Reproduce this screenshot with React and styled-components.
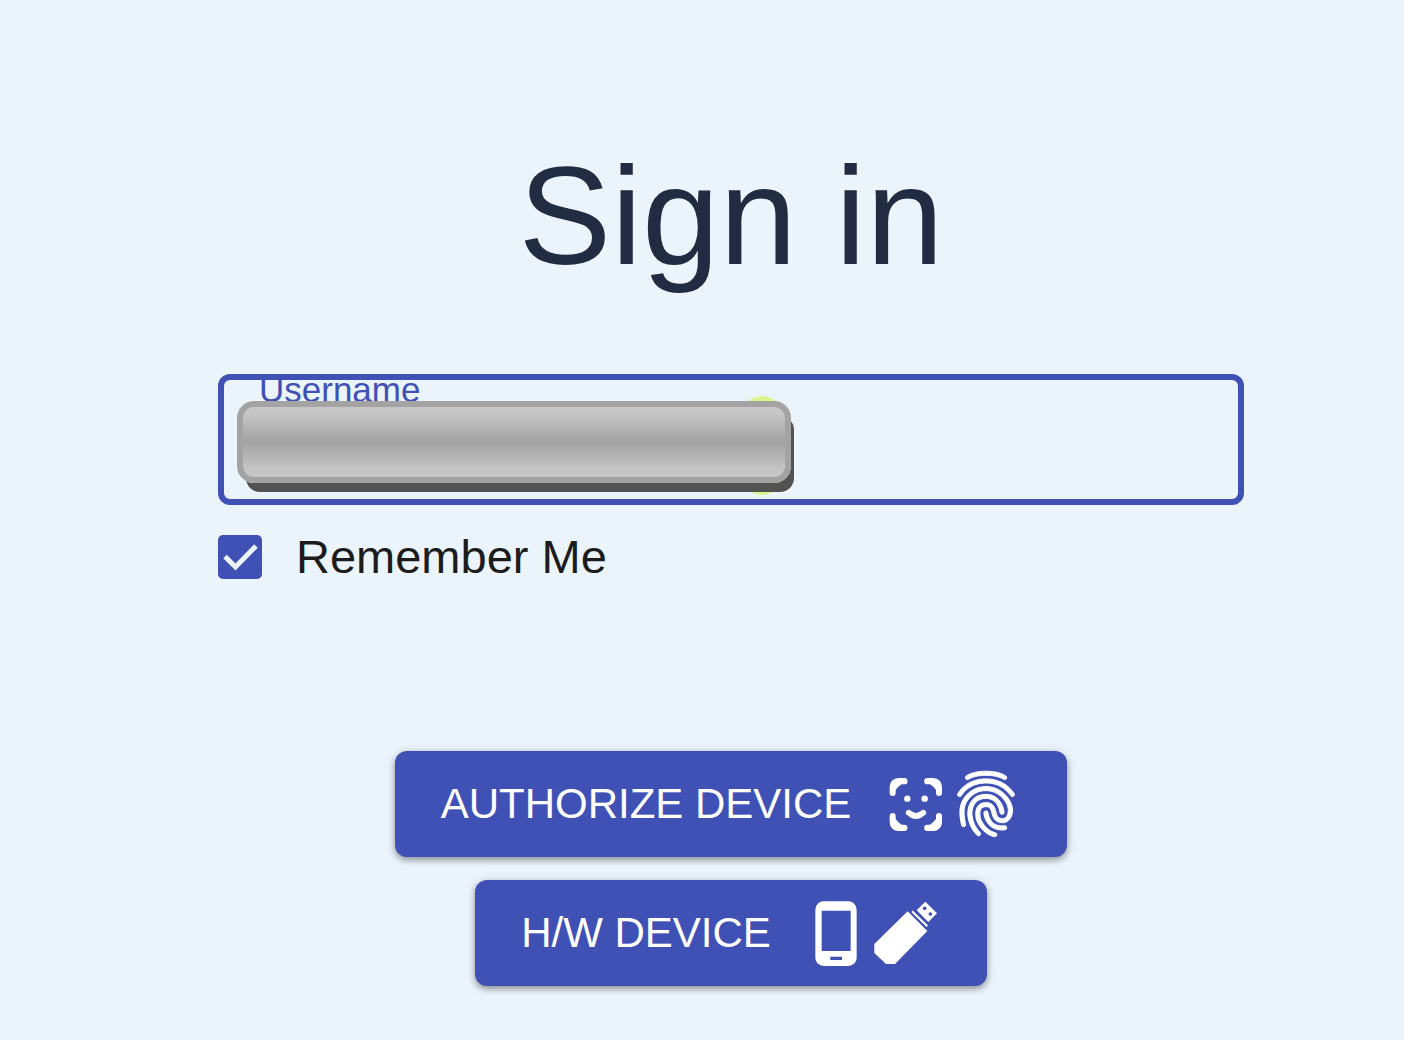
import React, { useState } from "react";
import styled, { createGlobalStyle } from "styled-components";
import { IoFingerPrint } from "react-icons/io5";

const GlobalStyle = createGlobalStyle`
  *, *::before, *::after { box-sizing: border-box; }
  body {
    margin: 0;
    background: #ebf4fb;
    font-family: "Liberation Sans", Arial, sans-serif;
  }
`;

const Page = styled.main`
  padding: 136px 160px 48px 218px;
`;

const Form = styled.form`
  display: flex;
  flex-direction: column;
`;

const Title = styled.h1`
  margin: 0 0 78px;
  font-size: 139px;
  line-height: 160px;
  font-weight: 400;
  text-align: center;
  color: #212c42;
`;

const Field = styled.div`
  position: relative;
  height: 131px;
  border: 6px solid #3f51b5;
  border-radius: 12px;
  overflow: hidden;
`;

const FieldLabel = styled.label`
  position: absolute;
  top: -8px;
  left: 35px;
  font-size: 35px;
  line-height: 36px;
  color: #3f51b5;
`;

const TextInput = styled.input`
  width: 100%;
  height: 100%;
  padding: 24px 32px 0;
  border: 0;
  outline: 0;
  background: transparent;
  font: inherit;
  font-size: 47px;
  color: #1c1c1c;
`;

const Marker = styled.span`
  position: absolute;
  top: 16px;
  left: 516px;
  width: 44px;
  height: 99px;
  border-radius: 22px;
  background: #d8f68c;
`;

const Plate = styled.span`
  position: absolute;
  top: 21px;
  left: 13px;
  width: 554px;
  height: 82px;
  border: 6px solid #a3a3a3;
  border-radius: 17px;
  background: linear-gradient(#c8c8c8, #c4c4c4 12%, #a3a3a3 50%, #c4c4c4 88%, #c8c8c8);
  box-shadow: 6px 12px 0 -3px #525252;
`;

const Remember = styled.label`
  display: flex;
  align-items: center;
  align-self: flex-start;
  gap: 34px;
  margin-top: 30px;
  font-size: 47px;
  line-height: 44px;
  color: #1c1c1c;
`;

const CheckFrame = styled.span`
  display: grid;
  width: 44px;
  height: 44px;

  & > * {
    grid-area: 1 / 1;
  }

  svg {
    pointer-events: none;
  }
`;

const Checkbox = styled.input`
  appearance: none;
  width: 44px;
  height: 44px;
  margin: 0;
  border: 5px solid #3f51b5;
  border-radius: 5px;

  &:checked {
    background: #3f51b5;
  }
`;

const Actions = styled.div`
  display: flex;
  flex-direction: column;
  align-items: center;
  gap: 23px;
  margin-top: 172px;
`;

const Button = styled.button`
  display: flex;
  align-items: center;
  height: 106px;
  padding: 0 46px;
  border: 0;
  border-radius: 12px;
  background: #3f51b5;
  color: #fff;
  font: inherit;
  font-size: 42px;
  white-space: nowrap;
  cursor: pointer;
  box-shadow: 0 3px 6px rgba(0, 0, 0, 0.35), 0 1px 12px rgba(0, 0, 0, 0.1);
`;

const Icons = styled.span`
  display: flex;
  margin-left: 30px;
`;

const IconBox = styled.span`
  display: grid;
  place-items: center;
  width: 70px;
  height: 70px;
`;

const FingerprintIcon = styled(IoFingerPrint)`
  width: 70px;
  height: 70px;

  path {
    stroke: #fff;
    stroke-width: 7px;
  }
`;

const corner =
  "M41 108a9 9 0 0 1-9-9V80A26 26 0 0 1 58 54H76a9.5 9.5 0 0 1 0 19H68Q58 79 50 90V99a9 9 0 0 1-9 9z";

function FaceIcon() {
  return (
    <svg width="70" height="70" viewBox="6 27 210 210" fill="#fff" aria-hidden="true">
      <path d={corner} />
      <path d={corner} transform="matrix(-1 0 0 1 221 0)" />
      <path d={corner} transform="matrix(1 0 0 -1 0 267)" />
      <path d={corner} transform="matrix(-1 0 0 -1 221 267)" />
      <circle cx="85" cy="116" r="9.5" />
      <circle cx="137" cy="116" r="9.5" />
      <path d="M89 158Q111 178 133 158" fill="none" stroke="#fff" strokeWidth="17" strokeLinecap="round" />
    </svg>
  );
}

function PhoneIcon() {
  return (
    <svg width="42" height="65" viewBox="44 32 126 195" aria-hidden="true">
      <rect x="45" y="33" width="124" height="194" rx="25" fill="#fff" />
      <path d="M64 61H151V182H64zM90 199H125V209H90z" fill="#3f51b5" />
    </svg>
  );
}

function UsbIcon() {
  return (
    <svg width="64" height="64" viewBox="219 36 192 192" fill="#fff" aria-hidden="true">
      <path d="M320 67L379 126L282 225H255L220 192V165z" />
      <path d="M333 67L379 112" stroke="#fff" strokeWidth="6" />
      <path d="M373 38L408 73L382 99L347 64z" />
      <circle cx="371" cy="58" r="5.5" fill="#3f51b5" />
      <circle cx="388" cy="75" r="5.5" fill="#3f51b5" />
    </svg>
  );
}

export default function App() {
  const [remember, setRemember] = useState(true);

  return (
    <>
      <GlobalStyle />
      <Page>
        <Form onSubmit={(e) => e.preventDefault()}>
          <Title>Sign in</Title>
          <Field>
            <FieldLabel htmlFor="username">Username</FieldLabel>
            <TextInput id="username" type="text" autoComplete="username" />
            <Marker />
            <Plate />
          </Field>
          <Remember htmlFor="remember">
            <CheckFrame>
              <Checkbox
                id="remember"
                type="checkbox"
                checked={remember}
                onChange={(e) => setRemember(e.target.checked)}
              />
              {remember && (
                <svg width="44" height="44" viewBox="0 0 44 44" fill="none" aria-hidden="true">
                  <path d="M7 21.5L17.5 32L38 11" stroke="#ebf4fb" strokeWidth="5" />
                </svg>
              )}
            </CheckFrame>
            Remember Me
          </Remember>
          <Actions>
            <Button type="submit">
              AUTHORIZE DEVICE
              <Icons>
                <IconBox><FaceIcon /></IconBox>
                <IconBox><FingerprintIcon /></IconBox>
              </Icons>
            </Button>
            <Button type="button">
              H/W DEVICE
              <Icons>
                <IconBox><PhoneIcon /></IconBox>
                <IconBox><UsbIcon /></IconBox>
              </Icons>
            </Button>
          </Actions>
        </Form>
      </Page>
    </>
  );
}
